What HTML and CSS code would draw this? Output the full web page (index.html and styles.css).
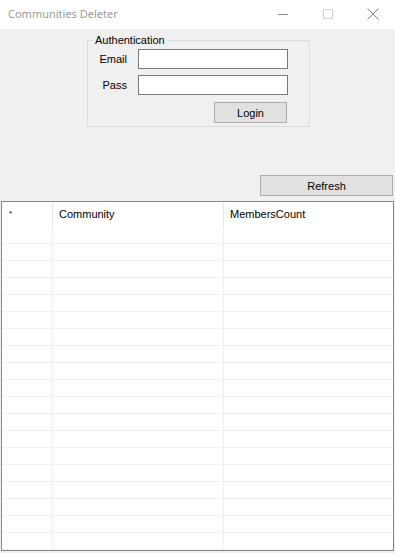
FILE: index.html
```html
<!DOCTYPE html>
<html lang="en">
<head>
    <meta charset="UTF-8">
    <meta name="viewport" content="width=device-width, initial-scale=1.0">
    <title>Communities Deleter</title>
    <link rel="stylesheet" href="styles.css">
</head>
<body>
    <div class="window">
        <div class="titlebar">
            <span class="title">Communities Deleter</span>
            <div class="controls">
                <span class="ctl">
                    <svg width="10" height="10" viewBox="0 0 10 10"><path d="M0 5.5h10" stroke="#909090" stroke-width="1"/></svg>
                </span>
                <span class="ctl">
                    <svg width="10" height="10" viewBox="0 0 10 10"><rect x="0.5" y="0.5" width="9" height="9" fill="none" stroke="#d4d4d4" stroke-width="1"/></svg>
                </span>
                <span class="ctl">
                    <svg width="12" height="12" viewBox="0 0 12 12"><path d="M0.5 0.5l11 11M11.5 0.5l-11 11" stroke="#8a8a8a" stroke-width="1"/></svg>
                </span>
            </div>
        </div>

        <div class="content">
            <fieldset class="auth">
                <legend>Authentication</legend>
                <div class="auth-grid">
                    <label for="email">Email</label>
                    <input type="text" id="email">
                    <label for="pass">Pass</label>
                    <input type="password" id="pass">
                    <button class="btn login">Login</button>
                </div>
            </fieldset>

            <button class="btn refresh">Refresh</button>

            <div class="grid">
                <div class="row head">
                    <div class="cell rh">*</div>
                    <div class="cell c1">Community</div>
                    <div class="cell c2">MembersCount</div>
                </div>
                <div id="rows"></div>
            </div>
        </div>
    </div>
    <script>
        const rows = document.getElementById("rows");
        for (let i = 0; i < 20; i++) {
            const r = document.createElement("div");
            r.className = "row";
            r.innerHTML = '<div class="cell rh"></div><div class="cell c1"></div><div class="cell c2"></div>';
            rows.appendChild(r);
        }
    </script>
</body>
</html>
```

FILE: styles.css
```css
body {
    margin: 0;
    background: #f0f0f0;
    font-family: "Liberation Sans", Arial, sans-serif;
    font-size: 11px;
}
.window {
    width: 395px;
    height: 553px;
    overflow: hidden;
}
.titlebar {
    height: 29px;
    background: #ffffff;
    display: flex;
    align-items: center;
    justify-content: space-between;
}
.title {
    font-family: "Noto Sans", "Open Sans", sans-serif;
    font-size: 11px;
    color: #9a9a9a;
    padding-left: 8px;
    padding-bottom: 2px;
}
.controls {
    display: flex;
    height: 100%;
}
.ctl {
    width: 45px;
    display: flex;
    align-items: center;
    justify-content: center;
    padding-bottom: 2px;
}
.content {
    display: flex;
    flex-direction: column;
}
.auth {
    margin: 5px 0 0 87px;
    padding: 0 0 3px 0;
    width: 223px;
    box-sizing: border-box;
    border: 1px solid #dcdcdc;
}
.auth legend {
    margin-left: 5px;
    padding: 0 2px;
    line-height: 13px;
    font-size: 11px;
    color: #000;
}
.auth-grid {
    display: grid;
    grid-template-columns: 39px 150px;
    column-gap: 11px;
    row-gap: 6px;
    padding-top: 2px;
}
.auth-grid label {
    text-align: right;
    align-self: center;
    color: #000;
}
.auth-grid input {
    height: 20px;
    box-sizing: border-box;
    border: 1px solid #7a7a7a;
    background: #fff;
    margin: 0;
    padding: 0 2px;
    outline: none;
}
.btn {
    font-family: "Liberation Sans", Arial, sans-serif;
    font-size: 11px;
    color: #000;
    background: #e1e1e1;
    border: 1px solid #adadad;
    height: 21px;
    padding: 0;
    margin: 0;
}
.login {
    grid-column: 2;
    justify-self: end;
    width: 73px;
    margin-right: 1px;
    margin-top: 1px;
}
.refresh {
    align-self: flex-end;
    width: 133px;
    margin: 48px 2px 0 0;
}
.grid {
    margin: 5px 0 0 1px;
    width: 393px;
    height: 350px;
    box-sizing: border-box;
    border: 1px solid #828790;
    background: #fff;
    overflow: hidden;
}
.row {
    display: flex;
    height: 17px;
    box-sizing: border-box;
    border-bottom: 1px solid #f0f0f0;
}
.row.head {
    height: 25px;
    border-bottom: none;
}
.cell {
    box-sizing: border-box;
    border-right: 1px solid #f0f0f0;
}
.rh {
    width: 51px;
}
.c1 {
    width: 171px;
}
.c2 {
    flex: 1;
    border-right: none;
}
.head .cell {
    padding: 5px 0 0 6px;
    color: #000;
    border-right: 1px solid #e4e4e4;
    margin: 1px 0 0;
}
.head .rh {
    padding-left: 7px;
    font-size: 8px;
    padding-top: 6px;
}
.head .c2 {
    border-right: none;
}
```
